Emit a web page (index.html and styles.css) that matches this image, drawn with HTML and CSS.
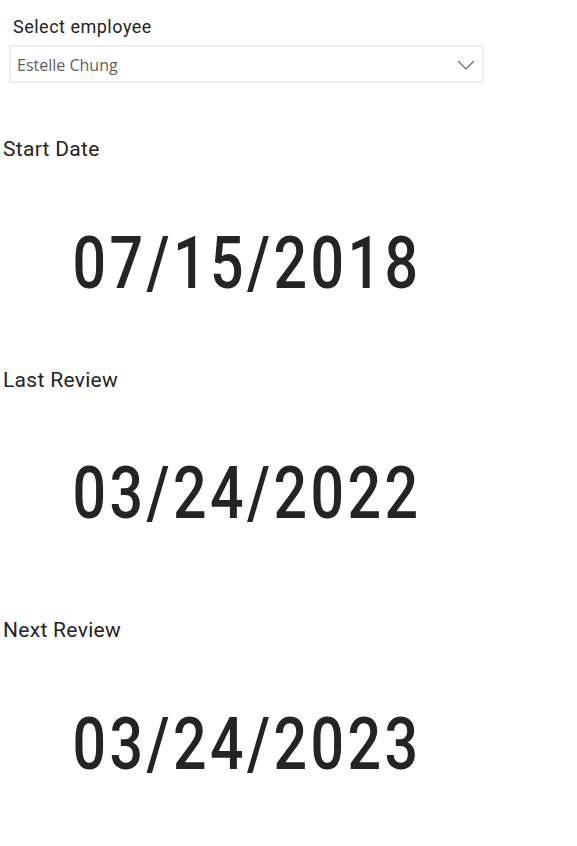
FILE: index.html
```html
<!DOCTYPE html>
<html>
<head>
<meta charset="utf-8">
<link rel="stylesheet" href="styles.css">
</head>
<body>
<div class="page">
  <div class="slicer">
    <div class="slicer-title">Select employee</div>
    <div class="dropdown">
      <span class="dropdown-value">Estelle Chung</span>
      <svg class="chevron" width="18" height="10" viewBox="0 0 18 10"><path d="M1 1 L9 9 L17 1" fill="none" stroke="#5f6b7a" stroke-width="1.2"/></svg>
    </div>
  </div>
  <div class="card card-1">
    <div class="card-label">Start Date</div>
    <div class="card-value">07/15/2018</div>
  </div>
  <div class="card card-2">
    <div class="card-label">Last Review</div>
    <div class="card-value">03/24/2022</div>
  </div>
  <div class="card card-3">
    <div class="card-label">Next Review</div>
    <div class="card-value">03/24/2023</div>
  </div>
</div>
</body>
</html>
```
FILE: styles.css
```css
html, body {
  margin: 0;
  padding: 0;
  background: #ffffff;
}
.page {
  width: 577px;
  height: 846px;
  display: flex;
  flex-direction: column;
  font-family: Roboto, "Noto Sans", sans-serif;
  color: #252423;
}
.slicer {
  padding: 16px 0 0 9px;
  width: 475px;
}
.slicer-title {
  font-size: 18px;
  line-height: 22px;
  letter-spacing: 0.5px;
  padding-left: 4px;
  color: #252423;
}
.dropdown {
  margin-top: 7px;
  height: 32px;
  border: 2px solid #eeeeee;
  display: flex;
  align-items: center;
  justify-content: space-between;
  padding: 2px 7px 0 6px;
}
.dropdown-value {
  font-family: "Open Sans", "Noto Sans", sans-serif;
  font-size: 16px;
  color: #605e5c;
}
.chevron {
  display: block;
}
.card {
  width: 494px;
  display: flex;
  flex-direction: column;
}
.card-1 { margin-top: 54px; }
.card-2 { margin-top: 64px; }
.card-3 { margin-top: 84px; }
.card-label {
  padding-left: 3px;
  font-size: 21px;
  line-height: 24px;
  letter-spacing: 0.3px;
  color: #252423;
}
.card-value {
  text-align: center;
  font-size: 72px;
  font-weight: 500;
  line-height: 80px;
  letter-spacing: 4.2px;
  transform: scaleX(0.82);
  color: #252423;
  margin-top: 63px;
}
.card-2 .card-value { margin-top: 62px; }
```
